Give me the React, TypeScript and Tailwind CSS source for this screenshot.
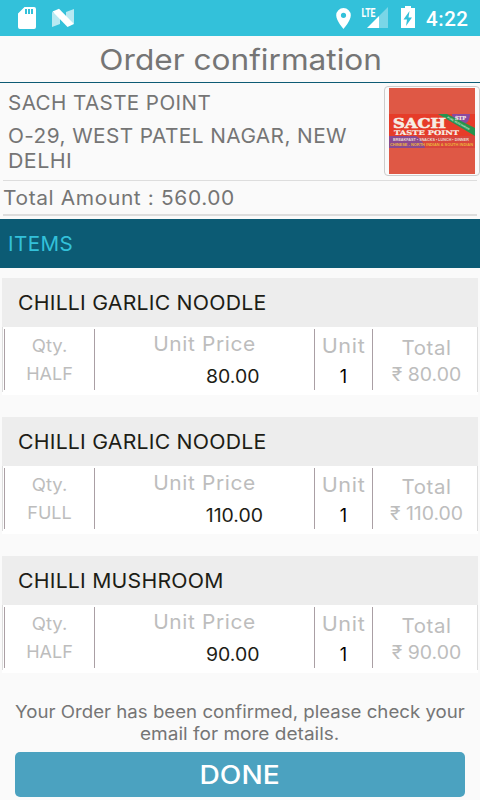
import React from 'react';

interface OrderItem {
    name: string;
    size: string;
    price: string;
    pricePadding: string;
}

const items: OrderItem[] = [
    { name: 'CHILLI GARLIC NOODLE', size: 'HALF', price: '80.00', pricePadding: 'pr-[55px]' },
    { name: 'CHILLI GARLIC NOODLE', size: 'FULL', price: '110.00', pricePadding: 'pr-[51px]' },
    { name: 'CHILLI MUSHROOM', size: 'HALF', price: '90.00', pricePadding: 'pr-[55px]' },
];

function StatusBar() {
    return (
        <div className="h-9 shrink-0 bg-[#33c1da] flex items-center">
            <svg className="w-[480px] h-9" viewBox="0 0 480 36" fill="#fff">
                {/* SD card */}
                <path fillRule="evenodd" d="M24.5 7H34a2 2 0 0 1 2 2v18a2 2 0 0 1-2 2H20a2 2 0 0 1-2-2V13.5zM25 9v5h2V9zm3 0v5h2V9zm3 0v5h2V9z" />
                {/* Nougat */}
                <path d="M52 12l8 3v9l-8 3zM74 9v15l-8-4v-8z" opacity=".65" />
                <path d="M52.500 11.500L59 8.800L74 24L67.500 27z" />
                {/* Location */}
                <path fillRule="evenodd" d="M343.500 8a7.300 7.300 0 0 0-7.300 7.300c0 5.500 7.300 13.700 7.300 13.700s7.300-8.200 7.300-13.700A7.300 7.300 0 0 0 343.500 8zm0 4.700a2.600 2.600 0 1 1 0 5.200 2.600 2.600 0 0 1 0-5.200z" />
                {/* Signal */}
                <path d="M388 7v21h-9V16z" opacity=".35" />
                <path d="M379 16v12h-12z" />
                <text x="361.500" y="16.500" fontSize="12.500" fontWeight="700" textLength="14" lengthAdjust="spacingAndGlyphs" className="font-['Roboto']">LTE</text>
                {/* Battery */}
                <path d="M401 8h4V6h6v2h4v20h-14z" />
                <path d="M409.500 11l-6 8.500h3.500l-1 6.500 6-8.500h-3.500z" fill="#33c1da" />
                <text x="426" y="25.500" fontSize="20.500" fontWeight="500" textLength="42" className="font-['Roboto']">4:22</text>
            </svg>
        </div>
    );
}

function RestaurantLogo() {
    return (
        <div className="w-24 h-[90px] mt-[3px] border border-[#ccc] rounded-sm bg-[#fafafa] flex justify-center items-center shrink-0">
            <svg className="w-[86px] h-[86px]" viewBox="0 0 86 86">
                <rect width="86" height="86" fill="#df5845" />
                <rect y="26" width="86" height="34" fill="#e63c29" />
                <path d="M63 26h18c0 7-4 11-9 10s-9-5-9-10z" fill="#8a4aa0" />
                <rect y="48" width="86" height="12" fill="#d9453c" />
                <path d="M0 48h27c5 3 8 7 9 12H0z" fill="#8a4a90" />
                <path d="M49 26h9l28 14v8z" fill="#26934f" />
                <g className="font-['DejaVu_Serif']" fontWeight="700" fill="#f6eee5" stroke="#f6eee5">
                    <text x="4" y="40" fontSize="13.500" strokeWidth=".6" textLength="53" lengthAdjust="spacingAndGlyphs">SACH</text>
                    <text x="5" y="47" fontSize="6.500" strokeWidth=".2" textLength="65" lengthAdjust="spacingAndGlyphs">TASTE POINT</text>
                    <text x="66" y="31.500" fontSize="5.500" strokeWidth=".2" textLength="11" lengthAdjust="spacingAndGlyphs">STP</text>
                </g>
                <g className="font-['Liberation_Sans']" fontWeight="700" fontSize="4">
                    <text x="4" y="52.500" fill="#eadcd2" textLength="76" lengthAdjust="spacingAndGlyphs">BREAKFAST • SNACKS • LUNCH • DINNER</text>
                    <text x="1" y="58.300" fill="#ecb53a" textLength="83" lengthAdjust="spacingAndGlyphs">CHINESE - NORTH INDIAN &amp; SOUTH INDIAN</text>
                    <text transform="translate(58 30) rotate(29)" fill="#d7eadc" fontSize="2.800" textLength="25" lengthAdjust="spacingAndGlyphs">PURE VEGETARIAN</text>
                </g>
            </svg>
        </div>
    );
}

function ItemCard({ item }: { item: OrderItem }) {
    return (
        <div className="mx-0.5 h-[117px] mb-[22px] bg-white">
            <div className="h-[49px] bg-[#ededed] pl-4 text-[20px] leading-[50px] text-[#1d1d16]">
                <span className="inline-block origin-left scale-x-[1.062] tracking-[0.2px]">{item.name}</span>
            </div>
            <div className="h-[65px] border-x border-[#ddd] flex pt-0.5 text-[#bdbdbd] text-center whitespace-nowrap">
                <div className="w-[91px] h-[61px] ml-px border-x border-[#aa9fa4] text-[17.500px] leading-7 pt-[3px]">
                    <div className="scale-x-[1.06]">Qty.</div>
                    <div className="scale-x-[1.03]">{item.size}</div>
                </div>
                <div className="w-[219px] h-[61px]">
                    <div className="text-[20px] leading-[30px] tracking-[0.6px] scale-x-[1.045]">Unit Price</div>
                    <div className={`text-[18px] leading-[35px] text-right text-[#1d1d16] ${item.pricePadding}`}>
                        <span className="inline-block origin-right scale-x-[1.08]">{item.price}</span>
                    </div>
                </div>
                <div className="w-[59px] h-[61px] border-x border-[#aa9fa4]">
                    <div className="text-[20px] leading-[35px] tracking-[0.6px] scale-x-[1.08]">Unit</div>
                    <div className="text-[18px] leading-[25px] text-black">1</div>
                </div>
                <div className="flex-1 h-[61px] pt-1 pl-[3px]">
                    <div className="text-[20px] leading-[30px] tracking-[0.6px] scale-x-[1.02]">Total</div>
                    <div className="text-[18px] leading-[23px] scale-x-[1.08]">₹ {item.price}</div>
                </div>
            </div>
        </div>
    );
}

export default function App() {
    return (
        <div className="w-[480px] h-[800px] overflow-hidden bg-[#fafafa] text-[#757575] font-['Inter','Noto_Sans',sans-serif] flex flex-col">
            <StatusBar />
            <h1 className="h-[47px] pl-px shrink-0 border-b border-[#0d5b74] text-center text-[29px] leading-[47px]">
                <span className="inline-block scale-x-[1.09]">Order confirmation</span>
            </h1>

            {/* Restaurant */}
            <div className="h-[97px] shrink-0 flex justify-between">
                <div className="pl-2 pt-2 text-[20px] leading-[25px] whitespace-nowrap">
                    <div><span className="inline-block origin-left scale-x-[1.03] tracking-[0.4px]">SACH TASTE POINT</span></div>
                    <div className="mt-2"><span className="inline-block origin-left scale-x-[1.04] tracking-[0.4px]">O-29, WEST PATEL NAGAR, NEW</span></div>
                    <div><span className="inline-block origin-left scale-x-[1.07] tracking-[0.4px]">DELHI</span></div>
                </div>
                <RestaurantLogo />
            </div>
            <div className="mx-[3px] h-9 shrink-0 border-t border-b-2 border-[#ddd] text-[20px] leading-[35px]">
                <span className="inline-block origin-left scale-x-[1.045] tracking-[0.6px]">Total Amount : 560.00</span>
            </div>

            {/* Items */}
            <div className="mt-[3px] h-[49px] shrink-0 bg-[#0c5b74] pl-2 text-[20px] leading-[50px] text-[#33c1da]">
                <span className="inline-block origin-left scale-x-[1.03] tracking-[0.4px]">ITEMS</span>
            </div>
            <div className="pt-2.5 h-[432px] shrink-0">
                {items.map((item, i) => (
                    <ItemCard key={i} item={item} />
                ))}
            </div>

            {/* Confirmation */}
            <p className="h-[52px] pt-px shrink-0 text-center text-[17.500px] leading-[22px]">
                <span className="inline-block scale-x-[1.066]">Your Order has been confirmed, please check your</span>
                <span className="inline-block scale-x-[1.088]">email for more details.</span>
            </p>
            <button className="mx-[15px] h-[45px] pt-0.5 shrink-0 rounded-[5px] bg-[#4ba2c0] text-white text-[25px] font-medium">
                <span className="inline-block scale-x-[1.125]">DONE</span>
            </button>
        </div>
    );
}
